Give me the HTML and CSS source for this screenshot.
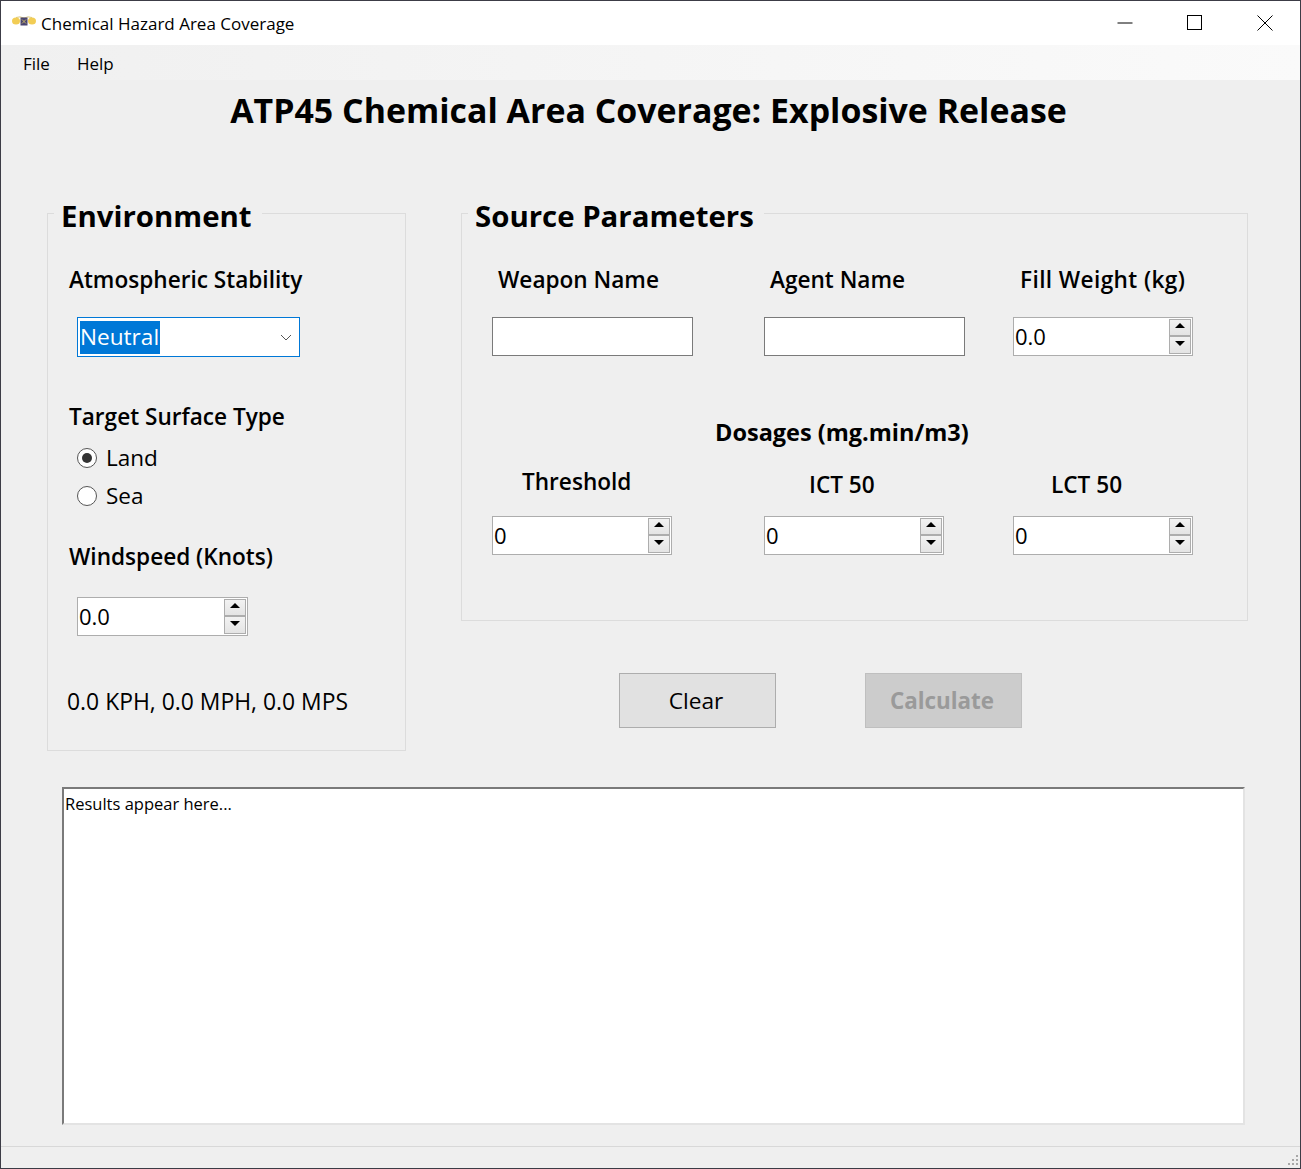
FILE: index.html
```html
<!DOCTYPE html>
<html lang="en">
<head>
  <meta charset="UTF-8">
  <title>Chemical Hazard Area Coverage</title>
  <link rel="stylesheet" href="styles.css">
</head>
<body>
<div class="window">
  <div class="titlebar">
    <svg class="app-icon" width="24" height="12" viewBox="0 0 24 12">
      <path d="M4 1.5Q8 0 12 2Q16 0 20 1.5" stroke="#d9c67c" fill="none"/>
      <ellipse cx="4" cy="5" rx="4" ry="3.6" fill="#f2cd55"/>
      <ellipse cx="20" cy="5" rx="4" ry="3.6" fill="#f2cd55"/>
      <rect x="8.5" y="1.5" width="7" height="8" fill="#4a4570"/>
      <path d="M10 3.5l4 4M14 3.5l-4 4" stroke="#c9b469" stroke-width="1"/>
    </svg>
    <span class="window-title">Chemical Hazard Area Coverage</span>
    <div class="controls">
      <div class="control">
        <svg width="16" height="16" viewBox="0 0 16 16"><path d="M0.5 8h15" stroke="#000" fill="none"/></svg>
      </div>
      <div class="control">
        <svg width="16" height="16" viewBox="0 0 16 16"><rect x="0.5" y="0.5" width="14" height="14" stroke="#000" fill="none"/></svg>
      </div>
      <div class="control">
        <svg width="16" height="16" viewBox="0 0 16 16"><path d="M0.5 0.5l15 15M15.5 0.5l-15 15" stroke="#000" fill="none"/></svg>
      </div>
    </div>
  </div>

  <div class="menubar">
    <span class="menu-item">File</span>
    <span class="menu-item">Help</span>
  </div>

  <div class="workspace">
    <h1>ATP45 Chemical Area Coverage: Explosive Release</h1>

    <div class="columns">
      <div class="panel panel-env">
        <h2>Environment</h2>
        <div class="label label-stability">Atmospheric Stability</div>
        <div class="combo">
          <span class="combo-value">Neutral</span>
          <svg width="12" height="7" viewBox="0 0 12 7"><path d="M1 1l5 5 5-5" stroke="#555" fill="none"/></svg>
        </div>
        <div class="label label-surface">Target Surface Type</div>
        <div class="radio radio-first"><span class="radio-dot radio-on"></span>Land</div>
        <div class="radio"><span class="radio-dot"></span>Sea</div>
        <div class="label label-wind">Windspeed (Knots)</div>
        <div class="spin spin-wind">
          <span class="spin-value">0.0</span>
          <div class="spin-btns"><span class="spin-up"></span><span class="spin-down"></span></div>
        </div>
        <div class="conversion">0.0 KPH, 0.0 MPH, 0.0 MPS</div>
      </div>

      <div class="right-col">
        <div class="panel panel-source">
          <h2>Source Parameters</h2>
          <div class="field-grid first-row">
            <div class="label indent-a">Weapon Name</div>
            <div class="label indent-a">Agent Name</div>
            <div class="label indent-b">Fill Weight (kg)</div>
            <div class="text-box"></div>
            <div class="text-box"></div>
            <div class="spin">
              <span class="spin-value">0.0</span>
              <div class="spin-btns"><span class="spin-up"></span><span class="spin-down"></span></div>
            </div>
          </div>
          <div class="dosage-title">Dosages (mg.min/m3)</div>
          <div class="field-grid second-row">
            <div class="label label-threshold">Threshold</div>
            <div class="label label-ict">ICT 50</div>
            <div class="label label-lct">LCT 50</div>
            <div class="spin">
              <span class="spin-value">0</span>
              <div class="spin-btns"><span class="spin-up"></span><span class="spin-down"></span></div>
            </div>
            <div class="spin">
              <span class="spin-value">0</span>
              <div class="spin-btns"><span class="spin-up"></span><span class="spin-down"></span></div>
            </div>
            <div class="spin">
              <span class="spin-value">0</span>
              <div class="spin-btns"><span class="spin-up"></span><span class="spin-down"></span></div>
            </div>
          </div>
        </div>
        <div class="actions">
          <div class="btn">Clear</div>
          <div class="btn btn-disabled">Calculate</div>
        </div>
      </div>
    </div>

    <div class="results">Results appear here...</div>
  </div>

  <div class="statusbar">
    <svg width="10" height="11" viewBox="0 0 10 11" class="grip">
      <rect x="8" y="0" width="2" height="2"/>
      <rect x="4" y="4" width="2" height="2"/><rect x="8" y="4" width="2" height="2"/>
      <rect x="0" y="8" width="2" height="2"/><rect x="4" y="8" width="2" height="2"/><rect x="8" y="8" width="2" height="2"/>
    </svg>
  </div>
</div>
</body>
</html>
```

FILE: styles.css
```css
html, body {
  margin: 0;
  padding: 0;
}
body {
  font-family: "Open Sans", "Noto Sans", Arial, sans-serif;
  color: #000;
  background: #efefef;
}
.window {
  box-sizing: border-box;
  width: 1301px;
  height: 1169px;
  border: 1px solid #3c3c46;
  display: flex;
  flex-direction: column;
  background: #efefef;
  overflow: hidden;
}

/* title bar */
.titlebar {
  height: 44px;
  flex: none;
  display: flex;
  align-items: center;
  background: #fff;
  padding-left: 11px;
}
.app-icon {
  margin-right: 5px;
  margin-top: -2px;
}
.window-title {
  font-size: 17px;
  margin-top: 1px;
}
.controls {
  margin-left: auto;
  display: flex;
  height: 100%;
}
.control {
  width: 70px;
  display: flex;
  align-items: center;
  justify-content: center;
  padding-bottom: 1px;
  box-sizing: border-box;
}

/* menu */
.menubar {
  height: 35px;
  flex: none;
  display: flex;
  align-items: center;
  padding: 2px 0 0 22px;
  box-sizing: border-box;
  gap: 27px;
  font-size: 17px;
  background: linear-gradient(to right, #f0f0f0, #fafafa);
}

.workspace {
  flex: 1;
  padding: 0 46px;
}
h1 {
  margin: 9px 0 0 0;
  height: 42px;
  line-height: 42px;
  text-align: center;
  font-size: 33.9px;
  font-weight: 700;
  padding-right: 4px;
  white-space: nowrap;
}
.columns {
  margin-top: 82px;
  display: grid;
  grid-template-columns: 359px 787px;
  column-gap: 55px;
  align-items: start;
}

/* group boxes */
.panel {
  box-sizing: border-box;
  border: 1px solid #dcdcdc;
}
.panel h2 {
  display: table;
  margin: -18px 0 0 6px;
  padding: 0 10px 0 7px;
  height: 40px;
  line-height: 40px;
  font-size: 29.4px;
  font-weight: 700;
  background: #efefef;
  white-space: nowrap;
}
.panel-env {
  height: 538px;
  padding-left: 21px;
}
.panel-env h2 {
  margin-left: -15px;
}
.panel-source {
  height: 408px;
}
.label {
  height: 34px;
  line-height: 34px;
  font-size: 22.6px;
  font-weight: 600;
  white-space: nowrap;
}
.label-stability {
  margin-top: 27px;
}
.label-surface {
  margin-top: 43px;
}
.label-wind {
  margin-top: 27px;
}

/* combo box */
.combo {
  box-sizing: border-box;
  width: 223px;
  height: 40px;
  margin: 20px 0 0 8px;
  border: 1px solid #0078d7;
  background: #fff;
  display: flex;
  align-items: center;
  justify-content: space-between;
  padding: 0 7px 0 2px;
}
.combo-value {
  width: 80px;
  height: 33px;
  line-height: 31px;
  font-size: 22.6px;
  background: #0078d7;
  color: #fff;
}

/* radios */
.radio {
  height: 34px;
  line-height: 34px;
  font-size: 22.5px;
  display: flex;
  align-items: center;
  margin: 4px 0 0 8px;
}
.radio-first {
  margin-top: 7px;
}
.radio-dot {
  box-sizing: border-box;
  width: 20px;
  height: 20px;
  border: 1px solid #555;
  border-radius: 50%;
  background: #fff;
  margin-right: 9px;
  position: relative;
}
.radio-on::after {
  content: "";
  position: absolute;
  left: 4px;
  top: 4px;
  width: 10px;
  height: 10px;
  border-radius: 50%;
  background: #333;
}

/* spin boxes */
.spin {
  box-sizing: border-box;
  width: 180px;
  height: 39px;
  border: 1px solid #adadad;
  background: #fff;
  display: flex;
  align-items: center;
  justify-content: space-between;
  padding-left: 1px;
}
.spin-value {
  font-size: 22px;
  line-height: 32px;
  margin-top: -2px;
}
.spin-btns {
  display: flex;
  flex-direction: column;
  margin-right: 1px;
}
.spin-up, .spin-down {
  box-sizing: border-box;
  width: 22px;
  height: 17px;
  border: 1px solid #adadad;
  background: linear-gradient(#f2f2f2, #e4e4e4);
  position: relative;
}
.spin-down {
  height: 18px;
}
.spin-up::after, .spin-down::after {
  content: "";
  position: absolute;
  left: 5px;
  width: 0;
  height: 0;
  border-left: 5px solid transparent;
  border-right: 5px solid transparent;
}
.spin-up::after {
  top: 3px;
  border-bottom: 5px solid #000;
}
.spin-down::after {
  top: 4px;
  border-top: 5px solid #000;
}
.spin-wind {
  width: 171px;
  margin: 23px 0 0 8px;
}
.conversion {
  height: 34px;
  line-height: 34px;
  font-size: 22.9px;
  margin: 49px 0 0 -2px;
  white-space: nowrap;
}

/* source fields */
.field-grid {
  display: grid;
  grid-template-columns: 272px 249px 180px;
  padding-left: 30px;
}
.first-row {
  margin-top: 27px;
  row-gap: 20px;
}
.second-row {
  margin-top: 19px;
  row-gap: 14px;
}
.indent-a {
  margin-left: 6px;
}
.indent-b {
  margin-left: 7px;
  letter-spacing: 0.4px;
}
.text-box {
  box-sizing: border-box;
  width: 201px;
  height: 39px;
  border: 1px solid #7a7a7a;
  background: #fff;
}
.dosage-title {
  margin: 59px 0 0 253px;
  height: 34px;
  line-height: 34px;
  font-size: 23.5px;
  font-weight: 700;
  white-space: nowrap;
}
.label-threshold {
  margin: -3px 0 0 30px;
}
.label-ict {
  margin-left: 45px;
}
.label-lct {
  margin-left: 38px;
}

/* buttons */
.actions {
  margin: 52px 0 0 158px;
  display: flex;
  gap: 89px;
}
.btn {
  box-sizing: border-box;
  width: 157px;
  height: 55px;
  line-height: 53px;
  text-align: center;
  font-size: 22.7px;
  border: 1px solid #adadad;
  background: #e1e1e1;
  padding-right: 3px;
}
.btn-disabled {
  background: #cccccc;
  border-color: #bfbfbf;
  color: #9a9a9a;
  font-size: 22.4px;
  font-weight: 700;
}

/* output */
.results {
  box-sizing: border-box;
  width: 1183px;
  height: 338px;
  margin: 36px 0 0 15px;
  padding: 2px 0 0 1px;
  border-style: solid;
  border-width: 2px;
  border-color: #7a7a7a #e3e3e3 #e3e3e3 #7a7a7a;
  background: #fff;
  font-size: 16.5px;
  line-height: 26px;
}

.statusbar {
  height: 21px;
  flex: none;
  border-top: 1px solid #d8d8d8;
  position: relative;
}
.grip {
  position: absolute;
  right: 2px;
  bottom: 2px;
  fill: #a8a8a8;
}
```
